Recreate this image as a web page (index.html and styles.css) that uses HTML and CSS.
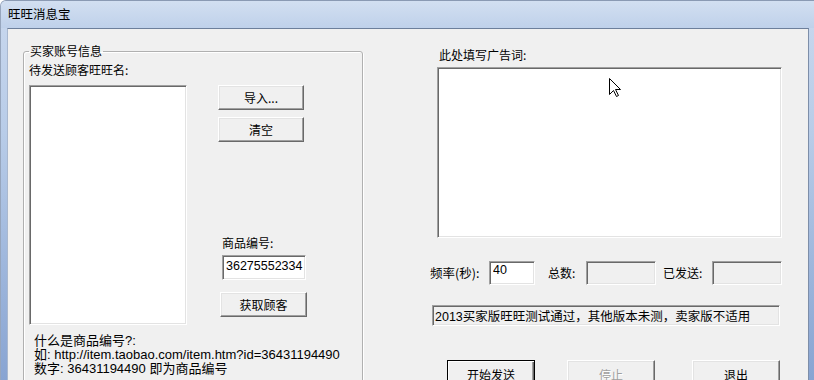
FILE: index.html
```html
<!DOCTYPE html>
<html lang="zh-CN">
<head>
    <meta charset="UTF-8">
    <title>旺旺消息宝</title>
    <link rel="stylesheet" href="styles.css">
</head>
<body>
    <div class="window">
        <div class="titlebar">旺旺消息宝</div>

        <div class="client">
            <!-- buyer account group -->
            <fieldset class="buyer">
                <legend>买家账号信息</legend>
                <div class="buyer-cols">
                    <div class="list-col">
                        <label class="lbl">待发送顾客旺旺名:</label>
                        <div class="sunken listbox"></div>
                    </div>
                    <div class="side-col">
                        <button class="btn">导入...</button>
                        <button class="btn btn-clear">清空</button>
                        <label class="lbl item-lbl" for="item_id">商品编号:</label>
                        <input class="sunken item-id" id="item_id" type="text" value="36275552334">
                        <button class="btn btn-fetch">获取顾客</button>
                    </div>
                </div>
                <p class="help">什么是商品编号?:<br>如: http://item.taobao.com/item.htm?id=36431194490<br>数字: 36431194490 即为商品编号</p>
            </fieldset>

            <!-- ad text and sending -->
            <div class="ad-col">
                <label class="lbl ad-lbl" for="ad_text">此处填写广告词:</label>
                <textarea class="sunken ad-text" id="ad_text"></textarea>

                <div class="stats">
                    <label class="lbl rate-lbl" for="rate">频率(秒):</label>
                    <input class="sunken rate" id="rate" type="text" value="40">
                    <label class="lbl total-lbl">总数:</label>
                    <input class="sunken readonly total" type="text" disabled>
                    <label class="lbl sent-lbl">已发送:</label>
                    <input class="sunken readonly sent" type="text" disabled>
                </div>

                <div class="sunken status">2013买家版旺旺测试通过，其他版本未测，卖家版不适用</div>

                <div class="actions">
                    <button class="btn btn-default btn-start">开始发送</button>
                    <button class="btn btn-stop" disabled>停止</button>
                    <button class="btn btn-exit">退出</button>
                </div>
            </div>
        </div>

        <!-- mouse pointer -->
        <svg class="cursor" width="13" height="20" viewBox="0 0 13 20">
            <path d="M0.5 0.5 L0.5 16.5 L4.5 12.5 L7.5 18.5 L9.5 17.5 L6.5 11.5 L11.5 11.5 Z" fill="#fff" stroke="#000" stroke-width="1" stroke-linejoin="miter"/>
        </svg>
    </div>
</body>
</html>
```

FILE: styles.css
```css
body {
    margin: 0;
    background-color: #fff;
    font-family: "Noto Sans CJK SC", sans-serif;
    font-size: 12px;
    color: #000;
}

.window {
    position: relative;
    width: 814px;
    height: 380px;
    box-sizing: border-box;
    display: flex;
    flex-direction: column;
    overflow: hidden;
    padding: 0 5px 0 6px;
    border-top: 1px solid #8a9ab3;
    border-left: 1px solid #97a6bd;
    border-top-left-radius: 6px;
    background: linear-gradient(#c9d8ee 0%, #b8cce8 35%, #88a4d2 100%);
}

.titlebar {
    height: 27px;
    line-height: 26px;
    padding-left: 1px;
    font-size: 12.5px;
    flex-shrink: 0;
    background: linear-gradient(#d2dff1, #bfd1ea);
    margin: 0 -5px 0 -6px;
    padding-left: 7px;
}

.client {
    flex: 1;
    display: flex;
    align-items: flex-start;
    overflow: hidden;
    background-color: #f0f0f0;
    border-top: 1px solid #6d7f9b;
    border-left: 1px solid #a9b8cf;
    border-right: 1px solid #7d8ea9;
}

.lbl {
    display: block;
    line-height: 14px;
    white-space: nowrap;
}

/* Sunken 3D edit borders */
.sunken {
    box-sizing: border-box;
    border: 1px solid;
    border-color: #a0a0a0 #fff #fff #a0a0a0;
    box-shadow: inset 1px 1px #696969, inset -1px -1px #e3e3e3;
    background-color: #fff;
    outline: none;
    margin: 0;
}

.sunken.readonly {
    background-color: #f0f0f0;
}

input.sunken {
    font-family: "Liberation Sans", "Noto Sans CJK SC", sans-serif;
    font-size: 12.5px;
    color: #000;
}

/* Classic buttons */
.btn {
    box-sizing: border-box;
    display: block;
    width: 86px;
    height: 25px;
    padding: 0;
    font-family: "Noto Sans CJK SC", sans-serif;
    font-size: 12px;
    color: #000;
    background-color: #f0f0f0;
    border: 1px solid;
    border-color: #fff #696969 #696969 #fff;
    box-shadow: inset -1px -1px #a0a0a0, inset 1px 1px #e3e3e3;
}

.btn-default {
    border-color: #000;
    box-shadow: inset 1px 1px #fff, inset -1px -1px #696969, inset -2px -2px #a0a0a0;
}

.btn:disabled {
    color: #a0a0a0;
    text-shadow: 1px 1px #fff;
}

/* Group box */
.buyer {
    box-sizing: border-box;
    width: 340px;
    margin: 14px 0 0 15px;
    padding: 4px 0 20px 5px;
    border: 1px solid #b0b0b0;
    border-radius: 3px;
    box-shadow: inset 1px 1px #fff, 1px 1px #fff;
    min-width: 0;
}

.buyer legend {
    padding: 0 1px;
    line-height: 16px;
    font-size: 12px;
}

.buyer-cols {
    display: flex;
    align-items: flex-start;
}

.list-col {
    width: 158px;
}

.listbox {
    margin-top: 8px;
    width: 158px;
    height: 240px;
}

.side-col {
    margin-left: 31px;
    padding-top: 22px;
}

.btn-clear {
    margin-top: 7px;
}

.item-lbl {
    margin: 94px 0 0 4px;
}

.item-id {
    display: block;
    width: 84px;
    height: 25px;
    margin: 5px 0 0 4px;
    padding: 0 2px 3px 3px;
}

.btn-fetch {
    width: 87px;
    margin: 12px 0 0 2px;
}

.help {
    margin: 9px 0 0;
    padding-left: 5px;
    font-family: "Liberation Sans", "Noto Sans CJK SC", sans-serif;
    font-size: 13px;
    line-height: 14px;
    white-space: nowrap;
}

/* Right column */
.ad-col {
    margin-left: 67px;
    padding-top: 19px;
    display: flex;
    flex-direction: column;
    align-items: flex-start;
}

.ad-lbl {
    margin-left: 9px;
}

.ad-text {
    display: block;
    width: 345px;
    height: 171px;
    margin: 5px 0 0 7px;
    resize: none;
}

.stats {
    display: flex;
    align-items: center;
    height: 24px;
    margin-top: 23px;
}

.stats input {
    height: 24px;
    padding: 0 2px 7px 3px;
}

.rate-lbl {
    width: 59px;
    font-size: 12.5px;
}

.rate {
    width: 46px;
}

.total-lbl {
    width: 38px;
    margin-left: 13px;
}

.total,
.sent {
    width: 70px;
}

.sent-lbl {
    width: 49px;
    margin-left: 7px;
}

.status {
    width: 348px;
    height: 21px;
    margin: 20px 0 0 2px;
    padding: 4px 0 0 2px;
    background-color: #f0f0f0;
    font-family: "Liberation Sans", "Noto Sans CJK SC", sans-serif;
    font-size: 12.5px;
    line-height: 15px;
    white-space: nowrap;
    overflow: hidden;
}

.actions {
    display: flex;
    margin-top: 34px;
}

.actions .btn {
    width: 88px;
    height: 28px;
}

.btn-start {
    margin-left: 17px;
}

.btn-stop {
    margin-left: 32px;
}

.btn-exit {
    margin-left: 37px;
}

.cursor {
    position: absolute;
    left: 608px;
    top: 77px;
}
```
